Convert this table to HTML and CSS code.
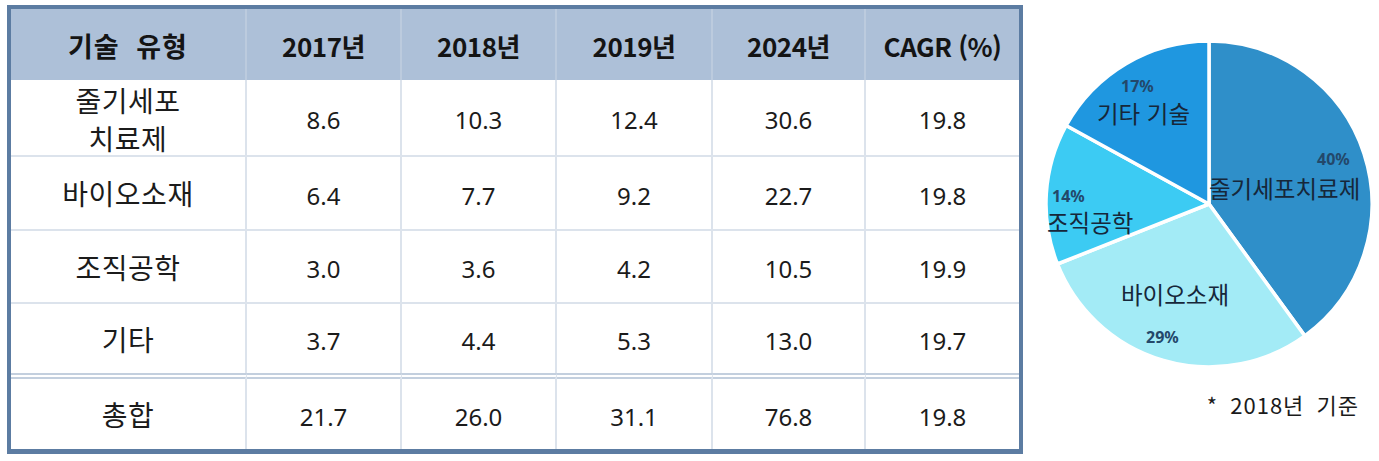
FILE: index.html
```html
<!DOCTYPE html>
<html lang="ko">
<head>
<meta charset="utf-8">
<title>시장 규모</title>
<link rel="stylesheet" href="styles.css">
</head>
<body>
<div class="page">
  <div class="table-frame">
    <div class="grid">
      <div class="cell head head-label">기술 유형</div>
      <div class="cell head">2017년</div>
      <div class="cell head">2018년</div>
      <div class="cell head">2019년</div>
      <div class="cell head">2024년</div>
      <div class="cell head last">CAGR (%)</div>

      <div class="cell label two">줄기세포<br>치료제</div>
      <div class="cell num">8.6</div>
      <div class="cell num">10.3</div>
      <div class="cell num">12.4</div>
      <div class="cell num">30.6</div>
      <div class="cell num last">19.8</div>

      <div class="cell label">바이오소재</div>
      <div class="cell num">6.4</div>
      <div class="cell num">7.7</div>
      <div class="cell num">9.2</div>
      <div class="cell num">22.7</div>
      <div class="cell num last">19.8</div>

      <div class="cell label">조직공학</div>
      <div class="cell num">3.0</div>
      <div class="cell num">3.6</div>
      <div class="cell num">4.2</div>
      <div class="cell num">10.5</div>
      <div class="cell num last">19.9</div>

      <div class="cell label pre-total">기타</div>
      <div class="cell num pre-total">3.7</div>
      <div class="cell num pre-total">4.4</div>
      <div class="cell num pre-total">5.3</div>
      <div class="cell num pre-total">13.0</div>
      <div class="cell num pre-total last">19.7</div>

      <div class="cell label total">총합</div>
      <div class="cell num total">21.7</div>
      <div class="cell num total">26.0</div>
      <div class="cell num total">31.1</div>
      <div class="cell num total">76.8</div>
      <div class="cell num total last">19.8</div>
    </div>
  </div>

  <div class="chart">
    <svg class="pie" width="349" height="350" viewBox="0 0 349 350" xmlns="http://www.w3.org/2000/svg">
      <g stroke="#ffffff" stroke-width="3.5" stroke-linejoin="round">
        <path fill="#2f8fc9" d="M180,174 L180,11 A163,163 0 0 1 275.81,305.87 Z"/>
        <path fill="#a3ebf6" d="M180,174 L275.81,305.87 A163,163 0 0 1 28.44,234 Z"/>
        <path fill="#3ccbf3" d="M180,174 L28.44,234 A163,163 0 0 1 37.16,95.47 Z"/>
        <path fill="#1f97e0" d="M180,174 L37.16,95.47 A163,163 0 0 1 180,11 Z"/>
      </g>
      <g class="pct">
        <text x="92" y="62">17%</text>
        <text x="288" y="135">40%</text>
        <text x="23" y="172">14%</text>
        <text x="117" y="313">29%</text>
      </g>
      <g class="lbl">
        <text x="68" y="93">기타 기술</text>
        <text x="180" y="168">줄기세포치료제</text>
        <text x="18" y="202">조직공학</text>
        <text x="92" y="274">바이오소재</text>
      </g>
    </svg>
    <div class="note">* 2018년 기준</div>
  </div>
</div>
</body>
</html>
```

FILE: styles.css
```css
html, body {
  margin: 0;
  padding: 0;
  background: #ffffff;
}

body {
  font-family: "Noto Sans CJK KR", "Noto Sans", sans-serif;
  color: #1b1b1b;
}

.page {
  display: flex;
  align-items: flex-start;
  width: 1379px;
  height: 461px;
}

.table-frame {
  margin: 5px 0 0 7px;
  border: 4px solid #5c7ca2;
  border-bottom-width: 5px;
}

.grid {
  display: grid;
  grid-template-columns: 236px 155px 155px 156px 153px 153px;
  grid-template-rows: 71px 77px 74px 73px 69px 76px;
  width: 1008px;
}

.cell {
  box-sizing: border-box;
  display: flex;
  align-items: center;
  justify-content: center;
  text-align: center;
  border-right: 2px solid #dce3ec;
  border-bottom: 2px solid #dce3ec;
}

.cell.last {
  border-right: none;
}

.head {
  background: #adc0d8;
  border-right: 2px solid #bccbde;
  border-bottom: none;
  font-weight: 700;
  font-size: 26px;
  letter-spacing: -0.5px;
  color: #141414;
  padding-top: 2px;
}

.head-label {
  font-size: 27px;
  word-spacing: 8px;
  letter-spacing: 1px;
}

.label {
  font-size: 28px;
  letter-spacing: 0.5px;
  line-height: 38px;
  font-weight: 400;
}

.label.two {
  padding-top: 2px;
}

.num {
  font-size: 24px;
  font-family: "Noto Sans", "Noto Sans CJK KR", sans-serif;
  padding-top: 4px;
}

.pre-total {
  border-bottom: none;
}

.total {
  border-bottom: none;
  border-top: 6px double #c3cfde;
}

.chart {
  display: flex;
  flex-direction: column;
  align-items: flex-end;
  margin-left: 6px;
  margin-top: 30px;
  width: 349px;
}

.pie {
  display: block;
}

.pie .pct text {
  font-family: "Noto Sans", "Liberation Sans", sans-serif;
  font-weight: 700;
  font-size: 16px;
  fill: #23486a;
}

.pie .lbl text {
  font-family: "Noto Sans CJK KR", sans-serif;
  font-size: 23.5px;
  fill: #16273a;
}

.note {
  margin-top: 8px;
  margin-right: 19px;
  font-size: 22px;
  letter-spacing: 1px;
  word-spacing: 5px;
  color: #1b1b1b;
}
```
